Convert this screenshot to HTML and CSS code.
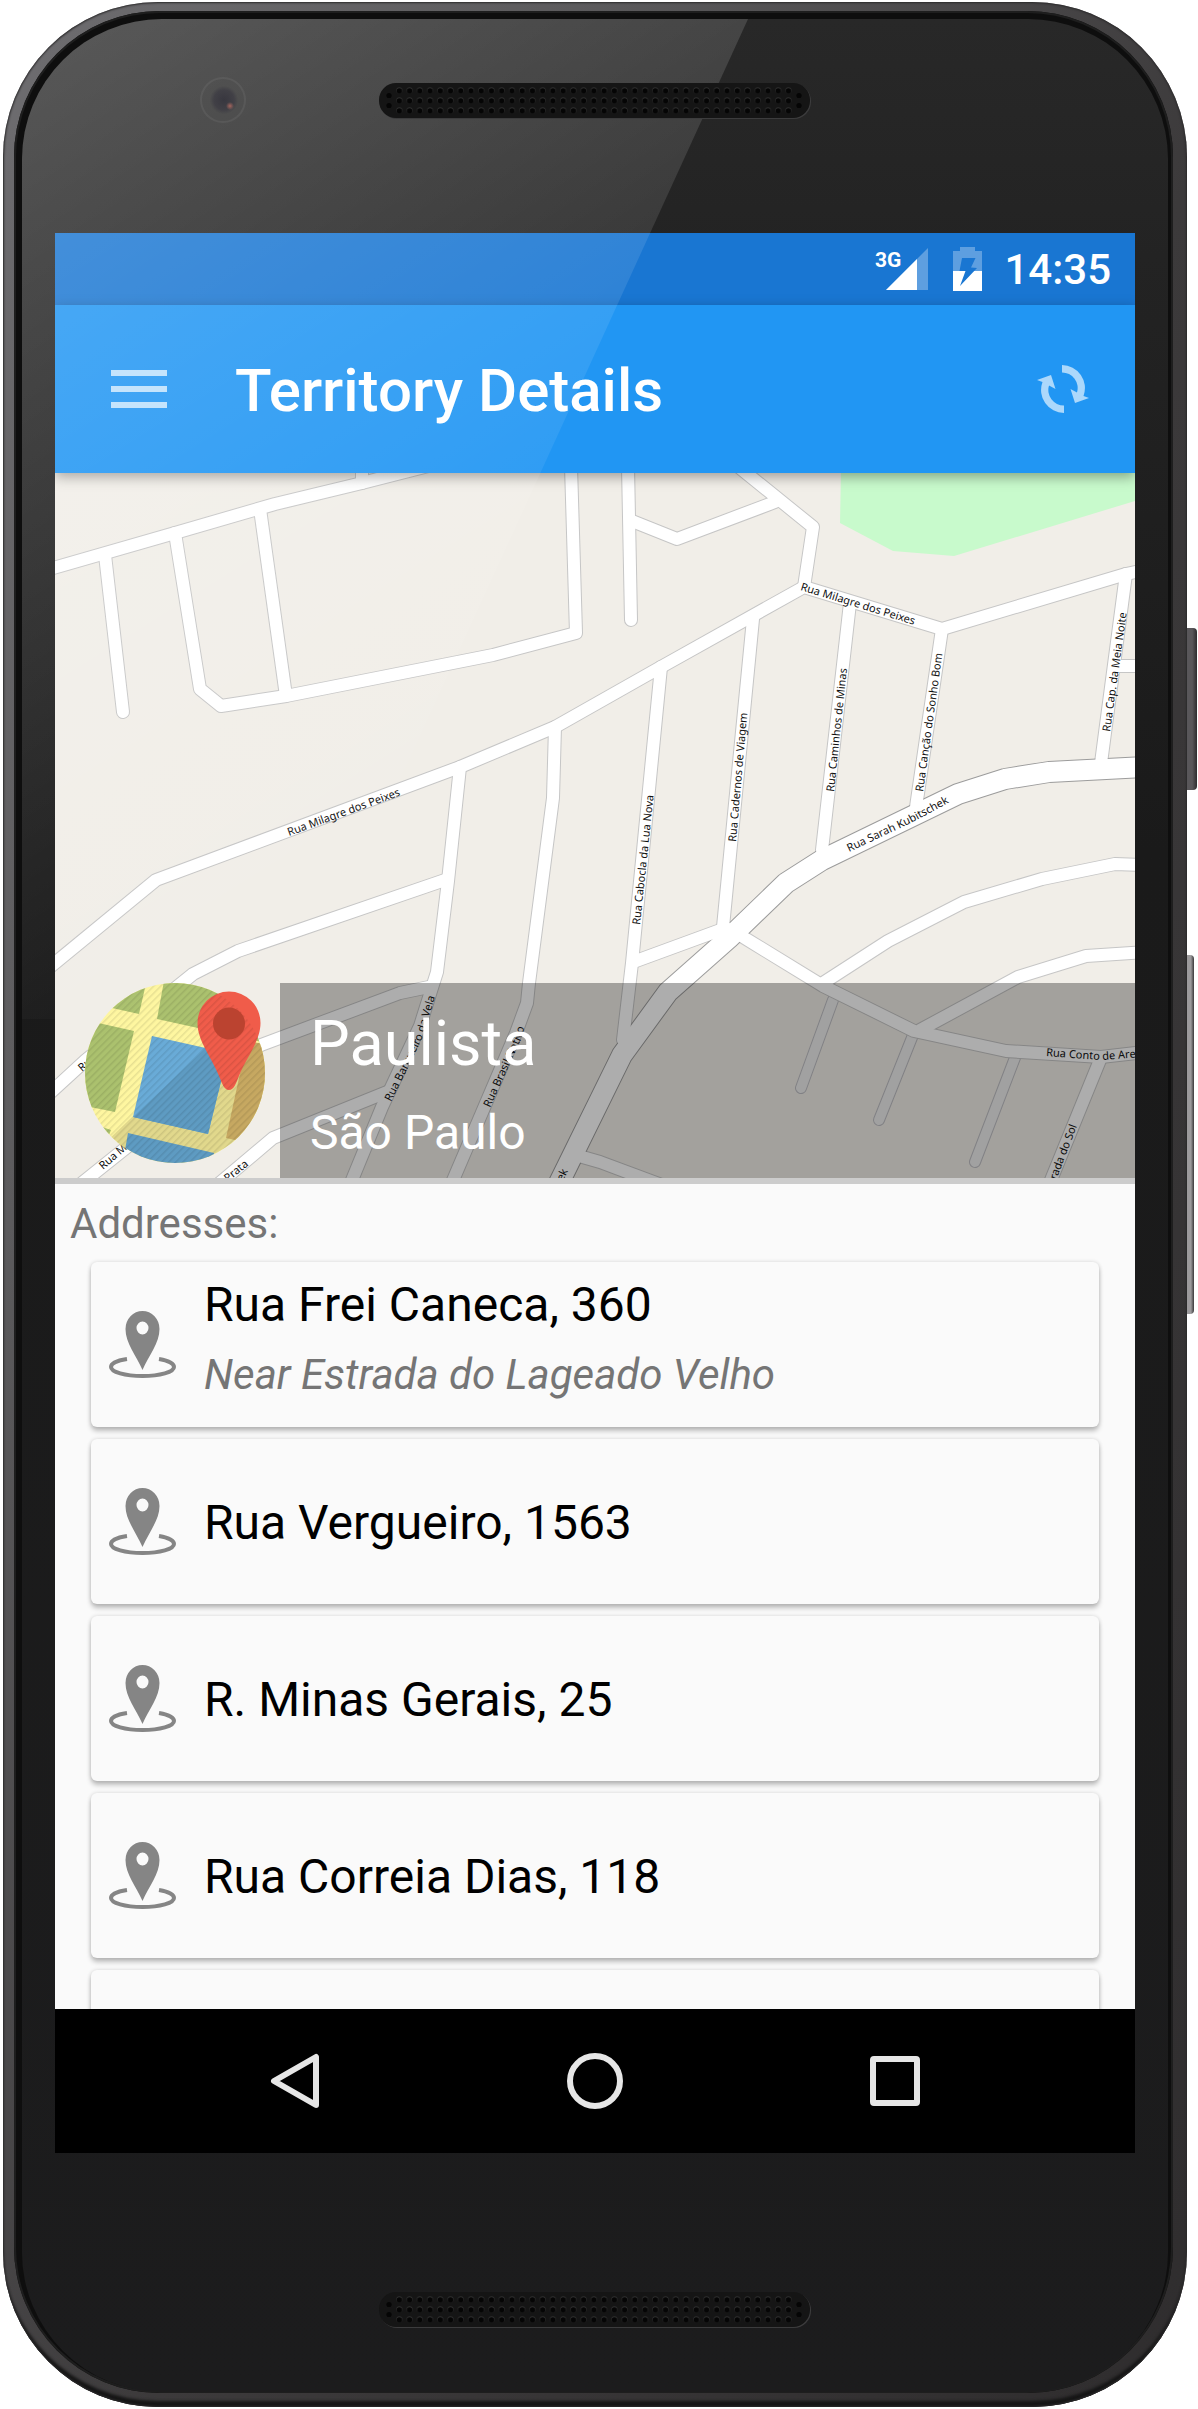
FILE: index.html
```html
<!DOCTYPE html>
<html lang="en">
<head>
<meta charset="utf-8">
<meta name="viewport" content="width=device-width, initial-scale=1">
<title>Territory Details</title>
<link rel="stylesheet" href="styles.css">
</head>
<body>
<svg class="defs" width="0" height="0" aria-hidden="true">
  <defs>
    <pattern id="dots" x="5" y="2" width="10.24" height="10" patternUnits="userSpaceOnUse">
      <circle cx="5.1" cy="5.2" r="3" fill="#2e2e2e"/>
      <circle cx="5.1" cy="5.8" r="2.6" fill="#050505"/>
    </pattern>
    <symbol id="speaker" viewBox="0 0 432 36">
      <rect x="1" y="1" width="431" height="35" rx="17" fill="#3c3c3d"/>
      <rect x="0" y="0" width="431" height="35" rx="17" fill="#151515"/>
      <rect x="15.2" y="2" width="399.4" height="30" fill="url(#dots)"/>
      <g fill="#050505"><circle cx="10" cy="12.5" r="2.6"/><circle cx="10" cy="22.5" r="2.6"/><circle cx="420" cy="12.5" r="2.6"/><circle cx="420" cy="22.5" r="2.6"/></g>
    </symbol>
    <symbol id="place" viewBox="0 0 67 67">
      <path fill="#858585" fill-rule="evenodd" d="M33.5 59C27 44 16.500 32 16.500 18a17 18 0 0 1 34 0C50.500 32 40 44 33.500 59zM33.500 23.500a6 6.500 0 1 0 0-13 6 6.500 0 1 0 0 13z"/>
      <path fill="none" stroke="#858585" stroke-width="4" d="M18 48C8 49.500 2 52.500 2 56c0 5 14 9 31.500 9S65 61 65 56c0-3.500-6-6.500-15-8"/>
    </symbol>
    <path id="sync-half" d="M25 0A23 23 0 0 1 46.500 31L52 33 38 38 33.500 24 40 27.500A15.500 15.500 0 0 0 25 7.500z"/>
  </defs>
</svg>

<main class="device">
  <span class="side-key side-key--power"></span>
  <span class="side-key side-key--volume"></span>
  <div class="rim">
    <div class="seam">
      <div class="glass">
        <div class="bezel bezel--top">
          <span class="camera"></span>
          <svg class="speaker" aria-hidden="true"><use href="#speaker"/></svg>
        </div>

        <div class="screen">
          <div class="status">
            <svg class="signal" viewBox="0 0 53 43" role="img" aria-label="3G signal">
              <path fill="#5e9fe0" d="M53 0v42H11z"/>
              <path fill="#fff" d="M42 11v31H11z"/>
              <text x="0" y="19" class="signal__label">3G</text>
            </svg>
            <svg class="battery" viewBox="0 0 29 44" role="img" aria-label="Battery charging">
              <path fill="#5e9fe0" d="M7 0h15v4h7v20H0V4h7z"/>
              <path fill="#fff" d="M0 24h29v20H0z"/>
              <path fill="#1976d2" d="M9 11h13.500L18 20.500l6 .5L7 39l5.500-15h-6z"/>
            </svg>
            <time class="clock">14:35</time>
          </div>

          <header class="toolbar">
            <button class="icon-btn" type="button" aria-label="Menu">
              <svg width="56" height="38" viewBox="0 0 56 38" fill="#fff" fill-opacity=".7"><path d="M0 0h56v6H0zM0 16h56v6H0zM0 32h56v6H0z"/></svg>
            </button>
            <h1 class="toolbar__title">Territory Details</h1>
            <button class="icon-btn" type="button" aria-label="Sync">
              <svg width="52" height="48" viewBox="0 0 52 48" fill="#acd8fb"><use href="#sync-half"/><use href="#sync-half" transform="rotate(180 26 24)"/></svg>
            </button>
          </header>

          <section class="hero">
            <svg class="map" viewBox="0 0 1080 705" preserveAspectRatio="xMidYMid slice" role="img" aria-label="Map of the territory">
              <defs>
                <g id="service">
                  <path d="M778 527L746 615"/><path d="M858 562L824 647"/><path d="M961 582L920 689"/>
                </g>
                <g id="streets">
                  <path d="M-5 96L120 60 220 31 307 10 385 -10"/>
                  <path d="M307 10V-10"/>
                  <path d="M50 82L68 239"/>
                  <path d="M120 60L145 216 166 233 231 223 438 182 521 160 516 -7"/>
                  <path d="M205 36L231 223"/>
                  <path d="M-5 494L101 407 405 294 500 254 606 194 749 114 887 156 1071 101 1090 97"/>
                  <path d="M573 -7L576 147"/>
                  <path d="M577 48L622 66 720 29"/>
                  <path d="M680 -9L758 54 749 114"/>
                  <path d="M606 194L577 490 568 567"/>
                  <path d="M698 146L668 454"/>
                  <path d="M795 130L767 377"/>
                  <path d="M887 156L861 334"/>
                  <path d="M1071 101L1046 290"/>
                  <path d="M1064 193H1090"/>
                  <path d="M524 683L545 689 612 714"/>
                  <path d="M581 488L671 455"/>
                  <path d="M688 464L768 513 859 558 951 578 1046 584 1090 579"/>
                  <path d="M768 510L833 468 909 429 987 406 1060 391 1090 392"/>
                  <path d="M865 557L963 504 1031 483 1090 479"/>
                  <path d="M1045 587L994 712"/>
                  <path d="M405 294L393 408 382 499 376 518 365 553 327 634 295 712"/>
                  <path d="M500 254L498 325 474 510 472 530 461 560 396 712"/>
                  <path d="M390 407L183 478 138 501 31 587 -5 620"/>
                  <path d="M374 514L345 520 206 572 150 602 72 674 22 714"/>
                  <path d="M332 619L218 665 160 714"/>
                </g>
                <path id="avenue" d="M1090 294L994 299 950 306 903 321 767 387 731 410 674 465 613 519 567 582 503 712"/>
                <path id="lbl-barqueiro" d="M336 629L367 566 383 515"/>
                <path id="lbl-brasil" d="M435 635L467 564 478 520"/>
                <path id="lbl-sarah" d="M794 379L856 350 912 320"/>
                <path id="lbl-conto" d="M991 583L1046 587 1130 581"/>
              </defs>
              <rect width="1080" height="705" fill="#f1eee8"/>
              <path fill="#c8facc" d="M786 -3L785 50 838 78 899 83 1080 28V-3z"/>
              <g class="road">
                <use href="#service" stroke="#bfbfc4" stroke-width="12"/>
                <use href="#service" stroke="#ededed" stroke-width="10"/>
                <use href="#streets" stroke="#c6c6c6" stroke-width="14"/>
                <use href="#avenue" stroke="#9c9c9c" stroke-width="22"/>
                <use href="#streets" stroke="#fff" stroke-width="12"/>
                <use href="#avenue" stroke="#fff" stroke-width="20"/>
              </g>
              <g class="street-names">
                <text transform="translate(234 363) rotate(-20)">Rua Milagre dos Peixes</text>
                <text transform="translate(745 117) rotate(17)">Rua Milagre dos Peixes</text>
                <text transform="translate(585 452) rotate(-84)">Rua Cabocla da Lua Nova</text>
                <text transform="translate(681 369) rotate(-85)">Rua Cadernos de Viagem</text>
                <text transform="translate(779 319) rotate(-84)">Rua Caminhos de Minas</text>
                <text transform="translate(868 319) rotate(-82)">Rua Canção do Sonho Bom</text>
                <text transform="translate(1055 259) rotate(-82)">Rua Cap. da Meia Noite</text>
                <text><textPath href="#lbl-sarah">Rua Sarah Kubitschek</textPath></text>
                <text><textPath href="#lbl-conto">Rua Conto de Areia</textPath></text>
                <text transform="translate(1022 653) rotate(-69)" text-anchor="end">Estrada do Sol</text>
                <text><textPath href="#lbl-barqueiro">Rua Barqueiro da Vela</textPath></text>
                <text><textPath href="#lbl-brasil">Rua Brasil Nativo</textPath></text>
                <text transform="translate(48 697) rotate(-41)">Rua Milagre</text>
                <text transform="translate(27 599) rotate(-41)">Rua</text>
                <text transform="translate(194 692) rotate(-39)" text-anchor="end">Rua da Prata</text>
                <text transform="translate(513 698) rotate(-64)" text-anchor="end">Rua Sarah Kubitschek</text>
              </g>
            </svg>
            <div class="hero__caption">
              <svg class="hero__logo" viewBox="0 0 180 180" aria-hidden="true">
                <defs>
                  <clipPath id="disc"><circle cx="90" cy="90" r="90"/></clipPath>
                  <pattern id="stripes" width="5" height="5" patternUnits="userSpaceOnUse" patternTransform="rotate(45)"><path d="M0 0h1.500v5H0z" fill="#000" fill-opacity=".09"/></pattern>
                </defs>
                <g clip-path="url(#disc)">
                  <path fill="#fef6a0" d="M0 0h180v180H0z"/>
                  <path fill="#e1d88c" d="M20 160L121 63h69v127H20z"/>
                  <path fill="#abc16e" d="M60 5L54 31-5 18V-6h67zM49 48L30 129-5 122V36zM79 -2L72 36l118 26V-2zM17 144l9 3-2 5z"/>
                  <path fill="#c6a861" d="M141 155l21-97 23 4v103z"/>
                  <path fill="#5e9bc2" d="M43 150l86 20v20H36z"/>
                  <path fill="#69abd7" d="M67 53l76 17-20 81-75-17z"/>
                  <path fill="#5e9bc2" d="M48 134l73-69 22 5-20 81z"/>
                </g>
                <path fill="#f05c4a" d="M144 107c-5 0-7-7-10-14-8-20-21.500-35-21.500-53a31.500 31.500 0 0 1 63 0c0 18-13.500 33-21.500 53-3 7-5 14-10 14z"/>
                <circle cx="90" cy="90" r="90" fill="url(#stripes)"/>
                <circle cx="144" cy="40.500" r="16" fill="#bb4330"/>
              </svg>
              <div class="hero__text">
                <h2 class="hero__name">Paulista</h2>
                <p class="hero__city">São Paulo</p>
              </div>
            </div>
          </section>

          <section class="addresses">
            <h3 class="addresses__label">Addresses:</h3>
            <ul class="cards">
              <li class="card"><svg class="card__icon" aria-hidden="true"><use href="#place"/></svg><div class="card__text card__text--noted"><p class="card__title">Rua Frei Caneca, 360</p><p class="card__note">Near Estrada do Lageado Velho</p></div></li>
              <li class="card"><svg class="card__icon" aria-hidden="true"><use href="#place"/></svg><div class="card__text"><p class="card__title">Rua Vergueiro, 1563</p></div></li>
              <li class="card"><svg class="card__icon" aria-hidden="true"><use href="#place"/></svg><div class="card__text"><p class="card__title">R. Minas Gerais, 25</p></div></li>
              <li class="card"><svg class="card__icon" aria-hidden="true"><use href="#place"/></svg><div class="card__text"><p class="card__title">Rua Correia Dias, 118</p></div></li>
              <li class="card"></li>
            </ul>
          </section>

          <nav class="navbar" aria-label="System">
            <button class="nav-btn" type="button" aria-label="Back"><svg width="56" height="56" viewBox="0 0 56 56"><path d="M49 4v48L7 28z"/></svg></button>
            <button class="nav-btn" type="button" aria-label="Home"><svg width="56" height="56" viewBox="0 0 56 56"><circle cx="28" cy="28" r="25"/></svg></button>
            <button class="nav-btn" type="button" aria-label="Recent apps"><svg width="56" height="56" viewBox="0 0 56 56"><rect x="6" y="6" width="44" height="44" rx="1"/></svg></button>
          </nav>
        </div>

        <div class="bezel bezel--bottom">
          <svg class="speaker" aria-hidden="true"><use href="#speaker"/></svg>
        </div>
      </div>
    </div>
  </div>
</main>
</body>
</html>
```
FILE: styles.css
```css
* { box-sizing: border-box; }

body {
  margin: 0;
  background: #fff;
  font-family: Roboto, "Liberation Sans", sans-serif;
}

h1, h2, h3, p, ul { margin: 0; padding: 0; font-weight: 400; }
ul { list-style: none; }
button { padding: 0; border: 0; background: none; cursor: pointer; }
svg { display: block; }
.defs { position: absolute; }

/* Phone body */
.device {
  position: relative;
  padding: 2px 11px 2px 3px;
}

.rim {
  position: relative;
  padding: 9px 14px 14px 11px;
  border-radius: 155px;
  background: linear-gradient(115deg, #6e6d70 0%, #5c5b5d 25%, #3c3a3b 55%, #2f2d2e 100%);
  box-shadow: inset 0 0 2px 1px #2b2a2b, inset 0 -8px 3px -2px #161616;
}

.seam {
  padding: 8px 5px 1px 8px;
  border-radius: 146px;
  background: #0e0e0e;
  box-shadow: inset 0 0 0 2px #1e1e1e;
}

.glass {
  position: relative;
  padding: 0 33px;
  border-radius: 140px;
  background: linear-gradient(#282828, #232323 10%, #1a1a1a 35%, #1c1c1d);
  overflow: hidden;
}

/* Diagonal reflection across the top left of the front glass */
.glass::after {
  content: "";
  position: absolute;
  z-index: 2;
  top: 0;
  left: 0;
  width: 726px;
  height: 1000px;
  background: linear-gradient(148deg, rgba(255, 255, 255, .23), rgba(255, 255, 255, 0) 76%);
  clip-path: polygon(0 0, 100% 0, 37% 100%, 0 100%);
  pointer-events: none;
}

.side-key {
  position: absolute;
  border-radius: 0 4px 4px 0;
}

.side-key--power {
  top: 628px;
  right: 1px;
  width: 12px;
  height: 162px;
  background: linear-gradient(90deg, #59575a 60%, #2e2c2e);
}

.side-key--volume {
  top: 955px;
  right: 4px;
  width: 9px;
  height: 359px;
  background: linear-gradient(90deg, #9c9a9c 65%, #3a383a);
}

.bezel {
  display: flex;
  justify-content: center;
}

.bezel--top { height: 214px; padding-top: 64px; }
.bezel--bottom { height: 239px; padding-top: 139px; }

.speaker {
  position: relative;
  z-index: 3;
  width: 432px;
  height: 36px;
}

.camera {
  position: absolute;
  z-index: 3;
  top: 58px;
  left: 178px;
  width: 46px;
  height: 46px;
  border: 2px solid rgba(255, 255, 255, .06);
  border-radius: 50%;
  background: radial-gradient(circle at 28px 27px, #a5665e 0, rgba(90, 60, 66, 0) 4px), radial-gradient(circle at 22px 21px, #38373f 0, #414046 10px, rgba(72, 71, 74, 0) 14px);
}

/* Screen */
.screen {
  display: flex;
  flex-direction: column;
  aspect-ratio: 9 / 16;
  background: #fafafa;
  overflow: hidden;
}

.status {
  flex: none;
  display: flex;
  align-items: center;
  justify-content: flex-end;
  height: 72px;
  padding-right: 24px;
  background: #1976d2;
  color: #fff;
}

.signal { width: 53px; height: 43px; margin-right: 25px; }
.signal__label { font-size: 21px; font-weight: 700; fill: #fff; }
.battery { width: 29px; height: 44px; margin-right: 22px; }
.clock { padding-top: 2px; font-size: 42px; font-weight: 500; line-height: 48px; }

.toolbar {
  flex: none;
  position: relative;
  z-index: 1;
  display: flex;
  align-items: center;
  height: 168px;
  padding: 0 46px 0 56px;
  background: #2196f3;
  box-shadow: 0 4px 12px rgba(0, 0, 0, .35);
  color: #fff;
}

.toolbar__title {
  flex: 1;
  margin-left: 68px;
  padding-top: 4px;
  font-size: 60px;
  font-weight: 500;
  line-height: 72px;
}

/* Map header */
.hero {
  flex: none;
  position: relative;
  border-bottom: 6px solid #ccc;
}

.map { width: 100%; height: auto; }
.road { fill: none; stroke-linejoin: round; stroke-linecap: round; }

.street-names {
  font-family: "Noto Sans", "Open Sans", sans-serif;
  font-size: 11px;
  fill: #111;
}

.hero__caption {
  position: absolute;
  right: 0;
  bottom: 0;
  left: 0;
  display: flex;
  height: 195px;
  padding-left: 30px;
}

.hero__logo { flex: none; width: 180px; height: 180px; margin-right: 15px; }

.hero__text {
  flex: 1;
  padding: 24px 30px 0;
  background: rgba(0, 0, 0, .32);
  color: #fff;
}

.hero__name { font-size: 63px; line-height: 74px; }
.hero__city { margin-top: 24px; font-size: 48px; line-height: 56px; }

/* Address list */
.addresses {
  flex: 1;
  min-height: 0;
  overflow: hidden;
}

.addresses__label {
  padding: 15px 15px 13px;
  color: #757575;
  font-size: 42px;
  line-height: 50px;
}

.cards {
  display: flex;
  flex-direction: column;
  gap: 12px;
  padding: 0 36px;
}

.card {
  flex: none;
  display: flex;
  align-items: center;
  gap: 28px;
  height: 165px;
  padding: 0 18px;
  border-radius: 6px;
  background: #fafafa;
  box-shadow: 0 4px 5px rgba(0, 0, 0, .24), 0 0 4px rgba(0, 0, 0, .14);
}

.card__icon { flex: none; width: 67px; height: 67px; }
.card__text { padding-top: 3px; }
.card__text--noted { padding-bottom: 15px; }
.card__title { color: #000; font-size: 48px; line-height: 56px; }
.card__note { margin-top: 17px; color: #757575; font-size: 42px; font-style: italic; line-height: 50px; }

/* System navigation */
.navbar {
  flex: none;
  display: flex;
  justify-content: center;
  height: 144px;
  background: #000;
}

.nav-btn {
  display: flex;
  align-items: center;
  justify-content: center;
  width: 300px;
}

.nav-btn svg {
  fill: none;
  stroke: #e6e6e6;
  stroke-width: 6;
  stroke-linejoin: round;
}
```
